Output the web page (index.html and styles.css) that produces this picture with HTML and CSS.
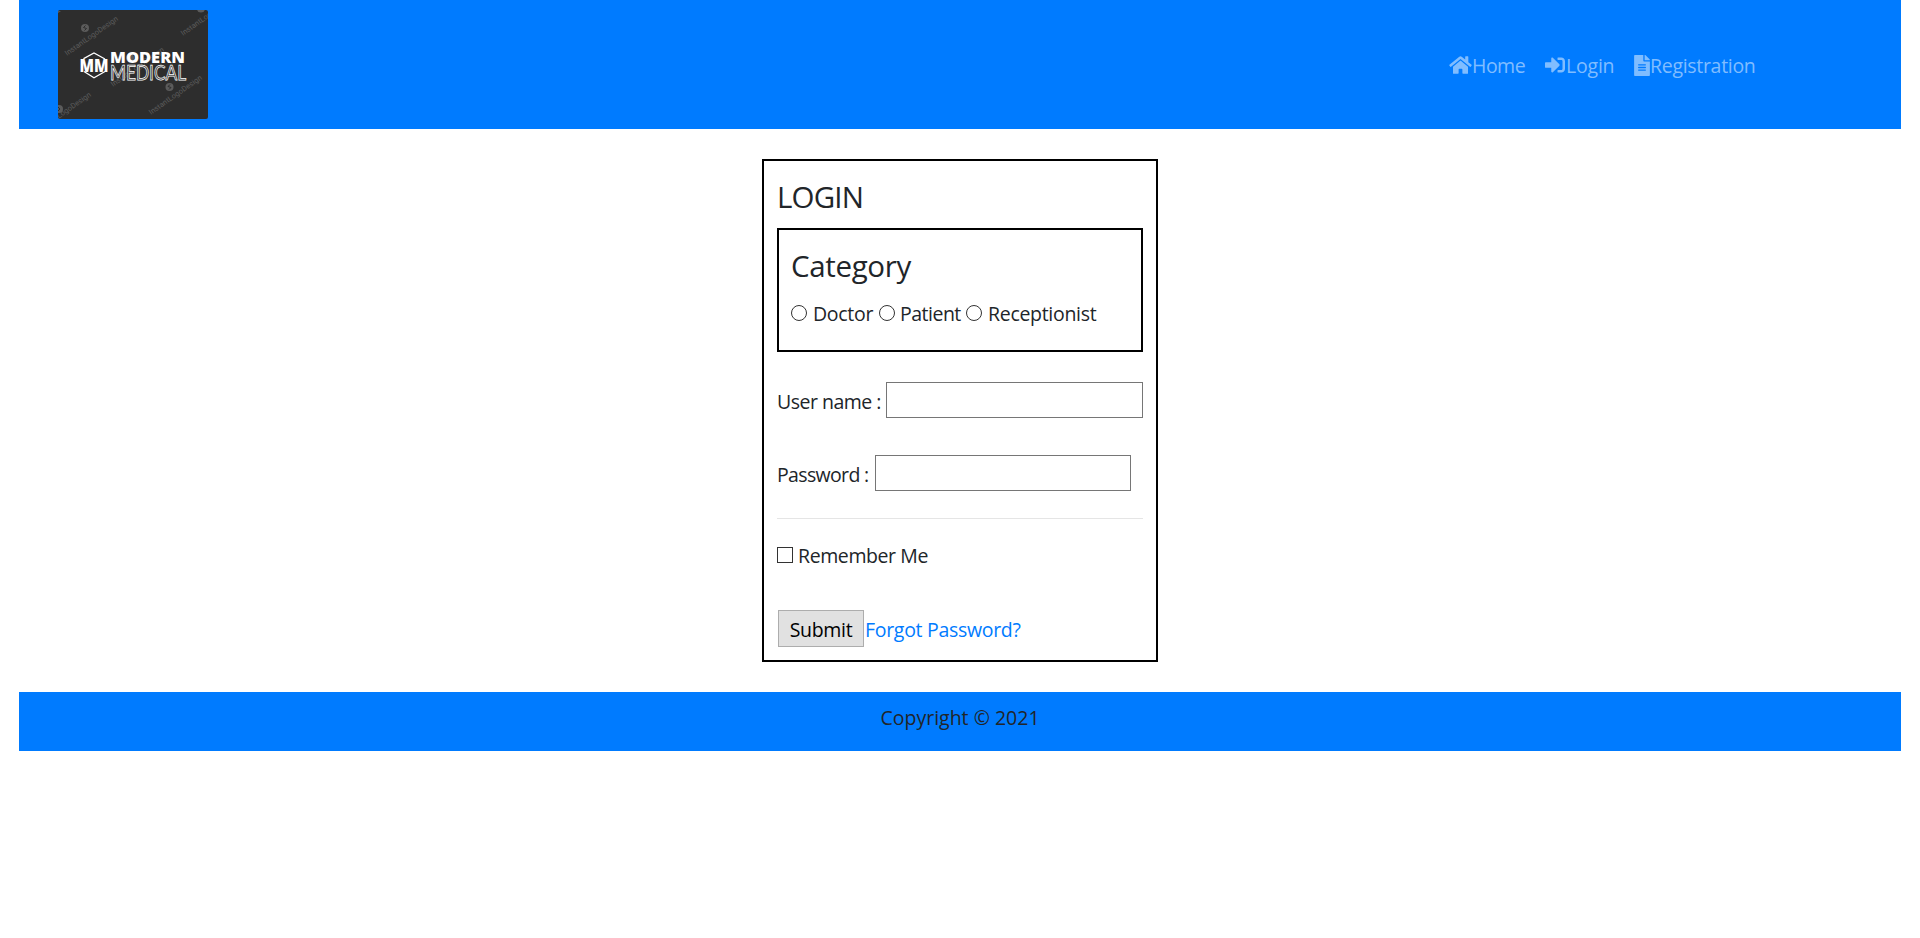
FILE: index.html
```html
<!DOCTYPE html>
<html lang="en">
<head>
<meta charset="utf-8">
<title>Login</title>
<link rel="stylesheet" href="styles.css">
</head>
<body>
<div class="page">
  <header class="navbar">
    <svg class="logo" width="150" height="109" viewBox="0 0 150 109" role="img">
      <rect width="150" height="109" fill="#2d2d2d"/>
      <g class="watermark">
        <text transform="translate(9 46) rotate(-35)" textLength="63">InstantLogoDesign</text>
        <text transform="translate(125 26) rotate(-35)" textLength="63">InstantLogoDesign</text>
        <text transform="translate(55 77) rotate(-35)" textLength="63">InstantLogoDesign</text>
        <text transform="translate(93 105) rotate(-35)" textLength="63">InstantLogoDesign</text>
        <text transform="translate(-18 122) rotate(-35)" textLength="63">InstantLogoDesign</text>
      </g>
      <g fill="#5b5b5b">
        <circle cx="27" cy="18" r="4"/><circle cx="143" cy="-1.500" r="4"/><circle cx="72" cy="48" r="4"/><circle cx="111.500" cy="77" r="4"/><circle cx="1" cy="99" r="4"/>
        <path d="M0 1h3l-3 2z"/>
      </g>
      <path d="M27.500 15.500l-2 2 3 1-2 2M112 74.500l-2 2 3 1-2 2M0 97l2 2-2 2" fill="none" stroke="#2d2d2d"/>
      <path d="M26 49v-.500l10-5.500 11 6M26 61.500l10 6.300L47 61.500" fill="none" stroke="#fff" stroke-width="1.300"/>
      <text class="mark" x="21.500" y="62" textLength="29" lengthAdjust="spacingAndGlyphs">MM</text>
      <text class="modern" x="52" y="53" textLength="75" lengthAdjust="spacingAndGlyphs">MODERN</text>
      <text class="medical" x="52" y="70" textLength="76" lengthAdjust="spacingAndGlyphs">MEDICAL</text>
    </svg>
    <nav class="links">
      <a class="link home"><svg width="23" height="20" viewBox="0 0 576 512"><path d="M280.370 148.260L96 300.110V464a16 16 0 0 0 16 16l112.060-.290a16 16 0 0 0 15.920-16V368a16 16 0 0 1 16-16h64a16 16 0 0 1 16 16v95.640a16 16 0 0 0 16 16.050L464 480a16 16 0 0 0 16-16V300L295.670 148.260a12.190 12.190 0 0 0-15.300 0zM571.600 251.470L488 182.560V44.050a12 12 0 0 0-12-12h-56a12 12 0 0 0-12 12v72.610L318.470 43a48 48 0 0 0-61 0L4.340 251.470a12 12 0 0 0-1.600 16.900l25.500 31A12 12 0 0 0 45.150 301l235.220-193.740a12.190 12.190 0 0 1 15.300 0L530.900 301a12 12 0 0 0 16.900-1.600l25.500-31a12 12 0 0 0-1.700-16.930z"/></svg><span>Home</span></a>
      <a class="link login"><svg width="20" height="20" viewBox="0 0 512 512"><path d="M416 448h-84c-6.600 0-12-5.400-12-12v-40c0-6.600 5.400-12 12-12h84c17.700 0 32-14.300 32-32V160c0-17.700-14.300-32-32-32h-84c-6.600 0-12-5.400-12-12V76c0-6.600 5.400-12 12-12h84c53 0 96 43 96 96v192c0 53-43 96-96 96zm-47-209L201 71c-15-15-41-4.500-41 17v96H24c-13.300 0-24 10.700-24 24v96c0 13.300 10.700 24 24 24h136v96c0 21.500 26 32 41 17l168-168c9.300-9.400 9.300-24.600 0-34z"/></svg><span>Login</span></a>
      <a class="link registration"><svg width="16" height="21" viewBox="0 0 384 512"><path d="M224 136V0H24C10.700 0 0 10.700 0 24v464c0 13.300 10.700 24 24 24h336c13.300 0 24-10.700 24-24V160H248c-13.200 0-24-10.800-24-24zm64 236c0 6.600-5.400 12-12 12H108c-6.600 0-12-5.400-12-12v-8c0-6.600 5.400-12 12-12h168c6.600 0 12 5.400 12 12v8zm0-64c0 6.600-5.400 12-12 12H108c-6.600 0-12-5.400-12-12v-8c0-6.600 5.400-12 12-12h168c6.600 0 12 5.400 12 12v8zm0-72v8c0 6.600-5.400 12-12 12H108c-6.600 0-12-5.400-12-12v-8c0-6.600 5.400-12 12-12h168c6.600 0 12 5.400 12 12zm96-114.100v6.100H256V0h6.100c6.400 0 12.500 2.500 17 7l97.900 98c4.500 4.500 7 10.600 7 16.900z"/></svg><span>Registration</span></a>
    </nav>
  </header>
  <main>
    <form class="card">
      <h2 class="title">LOGIN</h2>
      <section class="category">
        <h2 class="subtitle">Category</h2>
        <div class="options">
          <label class="option doctor"><input type="radio" name="category"><span>Doctor</span></label>
          <label class="option patient"><input type="radio" name="category"><span>Patient</span></label>
          <label class="option receptionist"><input type="radio" name="category"><span>Receptionist</span></label>
        </div>
      </section>
      <div class="field"><label class="user">User name :</label><input class="entry wide" type="text"></div>
      <div class="field second"><label class="pass">Password :</label><input class="entry" type="password"></div>
      <hr class="rule">
      <label class="remember"><input type="checkbox"><span>Remember Me</span></label>
      <div class="actions"><button class="submit" type="button"><span>Submit</span></button><a class="forgot">Forgot Password?</a></div>
    </form>
  </main>
  <footer class="footer"><span>Copyright © 2021</span></footer>
</div>
</body>
</html>
```
FILE: styles.css
```css
* { box-sizing: border-box; }
body {
  margin: 0;
  background: #fff;
  color: #212529;
  font: 19.5px/30px "Open Sans", "Noto Sans", sans-serif;
  white-space: nowrap;
}
.page { margin: 0 19px; }
.navbar {
  display: flex;
  justify-content: space-between;
  height: 129px;
  padding: 10px 147px 0 39px;
  background: #007bff;
}
.logo { display: block; border-radius: 2px; }
.watermark { fill: #5b5b5b; font: 7.500px Roboto, sans-serif; }
.mark { fill: #fff; font: 800 17px "Open Sans", sans-serif; }
.modern { fill: #fff; font: 800 16.500px "Open Sans", sans-serif; }
.medical { fill: #2d2d2d; stroke: #fff; stroke-width: .75px; font: 400 20.500px Lato, sans-serif; }
.links { display: flex; gap: 20px; height: 30px; margin-top: 40px; color: #80bdff; }
.link { display: flex; }
.link svg { flex: none; margin-top: 5px; fill: currentColor; }
.link span { padding-top: 1px; }
.home { width: 76px; letter-spacing: -.5px; }
.login { width: 69px; letter-spacing: -.2px; }
.registration { width: 120px; letter-spacing: -.3px; }
.login span { padding-left: 1px; }
.card {
  width: 396px;
  height: 503px;
  margin: 30px auto;
  padding: 13px;
  border: 2px solid #000;
}
.title, .subtitle { margin: 0; font-size: 29.500px; font-weight: 400; line-height: 36px; }
.title { height: 54px; padding-top: 5px; letter-spacing: -.85px; }
.category { height: 124px; padding: 18px 12px; border: 2px solid #000; }
.subtitle { height: 50px; letter-spacing: -.35px; }
.options { display: flex; }
.option, .remember { display: flex; letter-spacing: -.3px; }
.option span, .remember span { padding-top: 1px; }
.doctor { width: 88px; }
.doctor span { padding-left: 1px; }
.patient { width: 87px; letter-spacing: -.5px; }
.receptionist span { padding-left: 1px; }
.option input, .remember input {
  appearance: none;
  flex: none;
  width: 16px;
  height: 16px;
  margin: 7px 5px 0 0;
  border: 1px solid #333;
  background: #fff;
}
.option input { border-radius: 50%; }
.field { display: flex; height: 36px; margin-top: 30px; letter-spacing: -.5px; }
.field label { padding-top: 5px; }
.user { width: 109px; }
.pass { width: 98px; letter-spacing: -.65px; }
.second { margin-top: 37px; }
.entry { width: 256px; height: 36px; padding: 1px 2px; border: 1px solid #767676; }
.wide { width: 257px; }
.rule { height: 1px; margin: 27px 0 21px; border: 0; background: #e5e5e5; }
.remember { height: 30px; letter-spacing: -.4px; }
.actions { display: flex; margin: 40px 0 0 1px; }
.submit {
  width: 86px;
  height: 37px;
  padding: 3px 0 0;
  border: 1px solid #adadad;
  background: #e1e1e1;
  color: #000;
  font: inherit;
  letter-spacing: -.3px;
}
.forgot { padding: 5px 0 0 1px; color: #007bff; letter-spacing: -.3px; }
.footer { height: 59px; padding-top: 11px; background: #007bff; text-align: center; }
```
